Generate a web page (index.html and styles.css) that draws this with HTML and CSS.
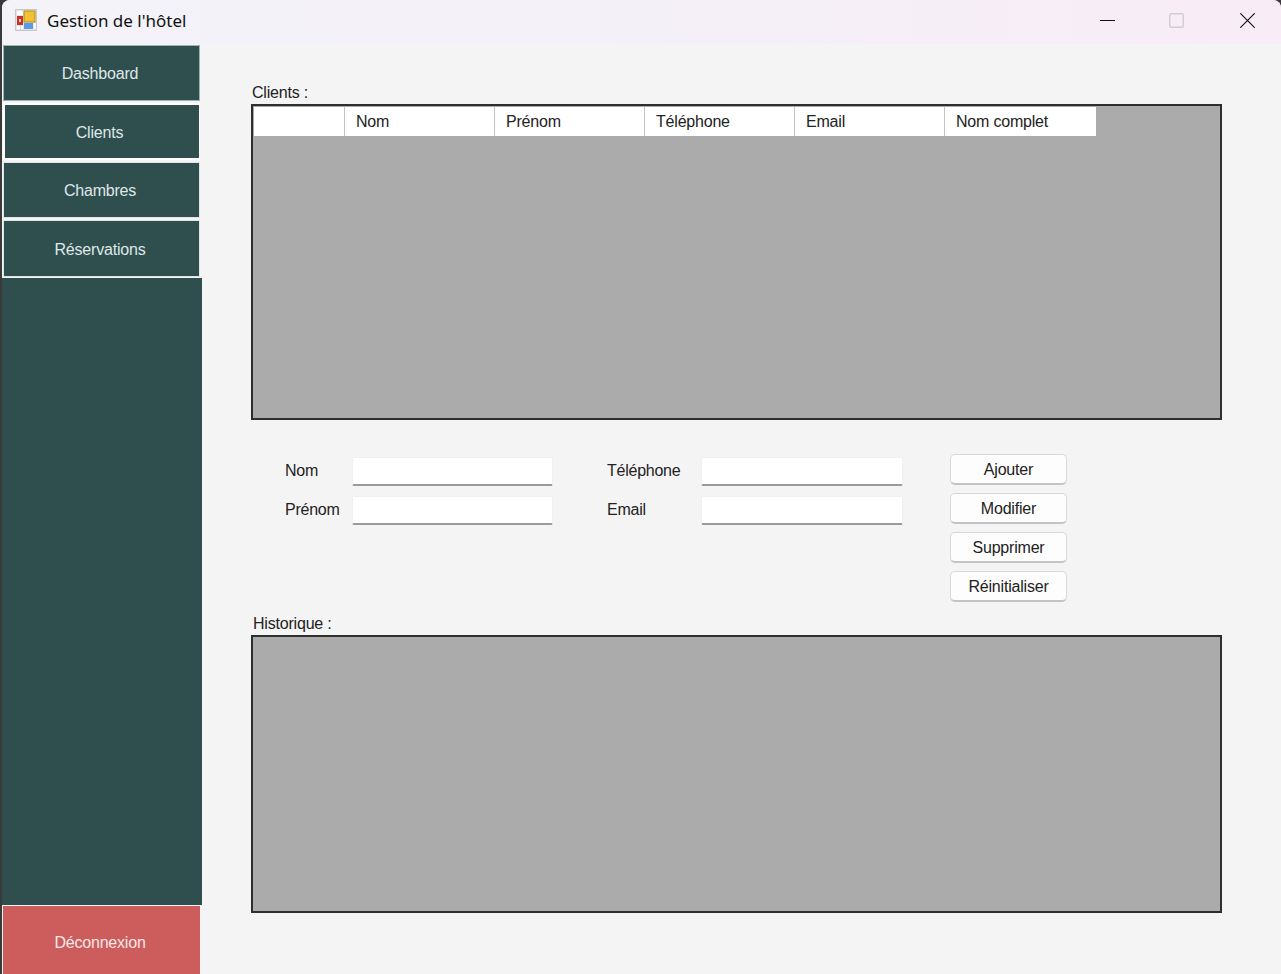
FILE: index.html
```html
<!DOCTYPE html>
<html lang="fr">
<head>
    <meta charset="UTF-8">
    <meta name="viewport" content="width=device-width, initial-scale=1.0">
    <title>Gestion de l'hôtel</title>
    <link rel="stylesheet" href="styles.css">
</head>
<body>
    <div class="window">
        <header class="titlebar">
            <svg class="app-icon" width="22" height="22" viewBox="0 0 22 22">
                <rect x="0.5" y="0.5" width="21" height="21" fill="#e4e4e4" stroke="#c8c8c8"/>
                <rect x="2" y="2" width="6" height="4" fill="#fff"/>
                <rect x="9" y="2" width="11" height="11" fill="#f2c230" stroke="#b08a20"/>
                <rect x="2" y="7" width="6" height="9" fill="#c8312b"/>
                <rect x="4" y="10" width="2" height="3" fill="#f3d9a0"/>
                <rect x="9" y="14" width="9" height="6" fill="#5b9be6"/>
                <rect x="2" y="17" width="3" height="3" fill="#fff"/>
                <rect x="6" y="17" width="2" height="3" fill="#fff"/>
                <rect x="19" y="14" width="1.5" height="6" fill="#fff"/>
            </svg>
            <span class="app-title">Gestion de l'hôtel</span>
            <div class="win-controls">
                <svg class="win-min" width="15" height="15" viewBox="0 0 15 15"><path d="M0 7.5H15" stroke="#111" fill="none"/></svg>
                <svg class="win-max" width="15" height="15" viewBox="0 0 15 15"><rect x="0.7" y="0.7" width="13.6" height="13.6" rx="1.5" stroke="#cfccd2" stroke-width="1.4" fill="none"/></svg>
                <svg class="win-close" width="15" height="15" viewBox="0 0 15 15"><path d="M0.3 0.3L14.7 14.7M14.7 0.3L0.3 14.7" stroke="#111" stroke-width="1.1" fill="none"/></svg>
            </div>
        </header>

        <div class="content">
            <!-- Menu -->
            <nav class="sidebar">
                <button class="nav-btn dashboard">Dashboard</button>
                <button class="nav-btn active">Clients</button>
                <button class="nav-btn rooms">Chambres</button>
                <button class="nav-btn bookings">Réservations</button>
                <div class="nav-spacer"></div>
                <button class="nav-btn logout">Déconnexion</button>
            </nav>

            <main class="main">
                <div class="section-label">Clients :</div>
                <div class="grid-view clients-grid">
                    <div class="grid-header">
                        <div class="col row-head"></div>
                        <div class="col">Nom</div>
                        <div class="col">Prénom</div>
                        <div class="col">Téléphone</div>
                        <div class="col">Email</div>
                        <div class="col last">Nom complet</div>
                    </div>
                </div>

                <div class="form">
                    <div class="field-col first">
                        <label>Nom</label>
                        <input type="text">
                        <label>Prénom</label>
                        <input type="text">
                    </div>
                    <div class="field-col second">
                        <label>Téléphone</label>
                        <input type="text">
                        <label>Email</label>
                        <input type="text">
                    </div>
                    <div class="actions">
                        <button class="action-btn">Ajouter</button>
                        <button class="action-btn">Modifier</button>
                        <button class="action-btn">Supprimer</button>
                        <button class="action-btn">Réinitialiser</button>
                    </div>
                </div>

                <div class="section-label history-label">Historique :</div>
                <div class="grid-view history-grid"></div>
            </main>
        </div>
    </div>
</body>
</html>
```

FILE: styles.css
```css
* {
    box-sizing: border-box;
}
html, body {
    height: 100%;
}
body {
    margin: 0;
    background: #3a3a3a;
    font-family: "Liberation Sans", Arial, sans-serif;
    font-size: 16px;
    color: #222;
    overflow: hidden;
}
.window {
    height: 974px;
    margin-left: 2px;
    background: #f4f4f4;
    border-radius: 8px 8px 0 0;
    overflow: hidden;
    display: flex;
    flex-direction: column;
}
.titlebar {
    height: 44px;
    flex: none;
    display: flex;
    align-items: center;
    padding: 0 0 4px 13px;
    background: linear-gradient(90deg, #f3f3f8 0%, #f4f0f8 50%, #f8ecf6 100%);
}
.app-icon {
    flex: none;
}
.app-title {
    margin-left: 10px;
    font-family: "Noto Sans", sans-serif;
    font-size: 17px;
    color: #111;
}
.win-controls {
    margin-left: auto;
    display: flex;
    align-items: center;
    padding-right: 26px;
}
.win-max {
    margin-left: 54px;
}
.win-close {
    margin-left: 56px;
}
.content {
    flex: 1;
    display: flex;
    min-height: 0;
}
.sidebar {
    width: 200px;
    flex: none;
    display: flex;
    flex-direction: column;
    padding-top: 1px;
}
.nav-btn {
    flex: none;
    width: 197px;
    height: 57px;
    margin: 0 0 2px 1px;
    padding: 2px 3px 0 0;
    background: #2f4f4f;
    border: 1px solid #dfe5e5;
    font-family: inherit;
    font-size: 16px;
    letter-spacing: -0.2px;
    color: #dfe7e7;
}
.nav-btn.dashboard {
    height: 56px;
    border-color: #9fb2b2;
}
.nav-btn.active {
    padding-right: 5px;
    border: 2px solid #fff;
    border-right-width: 1px;
}
.nav-btn.rooms {
    height: 56px;
}
.nav-btn.bookings {
    margin-bottom: 1px;
    padding-top: 3px;
}
.nav-spacer {
    flex: 1;
    background: #2f4f4f;
}
.nav-btn.logout {
    height: 68px;
    margin: 1px 0 0 1px;
    padding-top: 5px;
    background: #cd5c5c;
    border: none;
    color: #fbe8e8;
}
.main {
    flex: 1;
    padding: 39px 0 0 49px;
}
.section-label {
    height: 18px;
    line-height: 20px;
    margin: 0 0 3px 1px;
    letter-spacing: -0.2px;
}
.history-label {
    margin-left: 2px;
    margin-top: 12px;
}
.grid-view {
    width: 971px;
    background: #ababab;
    border: 2px solid #2e2e2e;
}
.clients-grid {
    height: 316px;
    padding: 1px;
}
.history-grid {
    height: 278px;
}
.grid-header {
    display: flex;
    width: 842px;
    height: 29px;
    background: #fff;
}
.col {
    width: 150px;
    padding-left: 11px;
    line-height: 30px;
    letter-spacing: -0.2px;
    border-left: 1px solid #c4c4c4;
}
.col.row-head {
    width: 90px;
    border-left: none;
}
.col.last {
    width: 152px;
}
.form {
    display: flex;
    margin: 34px 0 0 35px;
}
.field-col {
    display: grid;
    align-content: start;
    grid-template-rows: 32px 32px;
    row-gap: 7px;
    align-items: center;
}
.field-col.first {
    grid-template-columns: 66px 201px;
}
.field-col.second {
    grid-template-columns: 94px 202px;
    margin-left: 54px;
}
.field-col label {
    padding-top: 1px;
    letter-spacing: -0.25px;
}
.field-col.first label {
    margin-left: -1px;
}
.field-col input {
    width: 100%;
    height: 29px;
    align-self: end;
    background: #fff;
    border: 1px solid #f0f0f0;
    border-bottom: 2px solid #9a9a9a;
    border-radius: 2px;
    outline: none;
}
.actions {
    display: flex;
    flex-direction: column;
    gap: 8px;
    margin-left: 47px;
}
.action-btn {
    width: 117px;
    height: 31px;
    padding: 2px 0 0 0;
    background: #fdfdfd;
    border: 1px solid #d8d8d8;
    border-bottom: 2px solid #c4c4c4;
    border-radius: 5px;
    font-family: inherit;
    font-size: 16px;
    letter-spacing: -0.2px;
    color: #222;
}
```
